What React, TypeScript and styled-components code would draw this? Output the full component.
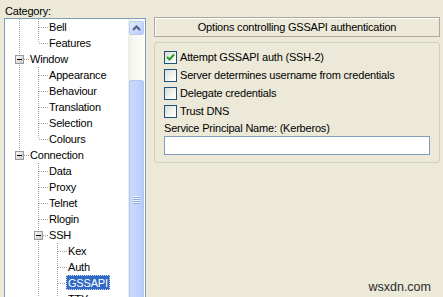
import styled, { createGlobalStyle } from "styled-components";

const GlobalStyle = createGlobalStyle`
  html, body {
    margin: 0;
    padding: 0;
    background: #ece9d8;
  }
  body {
    font-family: "Liberation Sans", Arial, sans-serif;
    font-size: 11px;
    letter-spacing: -0.2px;
    color: #000;
  }
`;

const Window = styled.div`
  width: 443px;
  height: 297px;
  overflow: hidden;
  background: #ece9d8;
  display: flex;
  position: relative;
`;

const LeftColumn = styled.div`
  width: 142px;
  padding-left: 4px;
  display: flex;
  flex-direction: column;
`;

const CategoryLabel = styled.div`
  height: 14px;
  padding-top: 5px;
  padding-left: 1px;
  line-height: 13px;
`;

const TreeBox = styled.div`
  height: 300px;
  border: 1px solid #7f9db9;
  background: #fff;
  display: flex;
`;

const TreeList = styled.div`
  flex: 1;
  padding-left: 5px;
  display: flex;
  flex-direction: column;
`;

const TreeRow = styled.div`
  height: 16px;
  display: flex;
  align-items: flex-start;
  white-space: nowrap;
`;

const TreeLabel = styled.span<{ $selected?: boolean }>`
  height: 15px;
  padding: 2px 2px 0 2px;
  line-height: 13px;
  margin-left: -1px;
  box-sizing: border-box;
  background: ${(p) => (p.$selected ? "#316ac5" : "transparent")};
  color: ${(p) => (p.$selected ? "#fff" : "#000")};
  outline: ${(p) => (p.$selected ? "1px dotted #c9d6ee" : "none")};
  outline-offset: -1px;
`;

const ScrollBar = styled.div`
  width: 17px;
  display: flex;
  flex-direction: column;
  align-items: center;
  background: linear-gradient(90deg, #eeede5 0%, #f7f7f1 30%, #fdfdfa 100%);
`;

const ScrollButton = styled.div`
  width: 15px;
  height: 15px;
  margin-top: 2px;
  box-sizing: border-box;
  border: 1px solid #b8cbf5;
  border-radius: 2px;
  background: linear-gradient(135deg, #e1eafe 0%, #c7d7fc 60%, #b7cbf7 100%);
  display: flex;
  align-items: center;
  justify-content: center;
`;

const ScrollTrack = styled.div`
  height: 50px;
`;

const ScrollThumb = styled.div`
  width: 15px;
  height: 266px;
  box-sizing: border-box;
  border: 1px solid #b4c7f2;
  border-radius: 2px;
  background: linear-gradient(90deg, #c9d9fd 0%, #c3d4fc 50%, #b8cbf8 100%);
  display: flex;
  flex-direction: column;
  align-items: center;
  justify-content: center;
  gap: 1px;
`;

const Grip = styled.div`
  width: 7px;
  height: 1px;
  background: #eef3ff;
  box-shadow: 0 1px 0 #8caae6;
`;

const RightColumn = styled.div`
  flex: 1;
  padding: 17px 3px 0 8px;
  display: flex;
  flex-direction: column;
  gap: 5px;
`;

const HeaderBox = styled.div`
  height: 20px;
  box-sizing: border-box;
  border: 1px solid #aca899;
  box-shadow: inset 1px 1px 0 #fff;
  display: flex;
  align-items: center;
  justify-content: center;
`;

const GroupBox = styled.div`
  height: 121px;
  box-sizing: border-box;
  border: 1px solid #d0d0bf;
  border-radius: 3px;
  padding: 5px 9px 0 9px;
  display: flex;
  flex-direction: column;
`;

const CheckRow = styled.label`
  height: 18px;
  display: flex;
  align-items: center;
  gap: 3px;
`;

const CheckBox = styled.span`
  width: 13px;
  height: 13px;
  box-sizing: border-box;
  border: 1px solid #1c5180;
  background: linear-gradient(135deg, #dcdcd7 0%, #f4f4f0 60%, #ffffff 100%);
  display: flex;
  align-items: center;
  justify-content: center;
`;

const FieldLabel = styled.div`
  height: 16px;
  line-height: 16px;
`;

const TextField = styled.div`
  height: 19px;
  box-sizing: border-box;
  border: 1px solid #7f9db9;
  background: #fff;
`;

const Watermark = styled.div`
  position: absolute;
  right: 12px;
  bottom: 3px;
  font-family: "Liberation Sans", Arial, sans-serif;
  font-size: 12.5px;
  letter-spacing: 0;
  color: #2a2a2a;
`;

type Guide = "none" | "pipe" | "tee" | "ell";

interface Node {
  label: string;
  guides: Guide[];
  box?: boolean;
  selected?: boolean;
}

const nodes: Node[] = [
  { label: "Bell", guides: ["pipe", "tee"] },
  { label: "Features", guides: ["pipe", "ell"] },
  { label: "Window", guides: ["tee"], box: true },
  { label: "Appearance", guides: ["pipe", "tee"] },
  { label: "Behaviour", guides: ["pipe", "tee"] },
  { label: "Translation", guides: ["pipe", "tee"] },
  { label: "Selection", guides: ["pipe", "tee"] },
  { label: "Colours", guides: ["pipe", "ell"] },
  { label: "Connection", guides: ["ell"], box: true },
  { label: "Data", guides: ["none", "tee"] },
  { label: "Proxy", guides: ["none", "tee"] },
  { label: "Telnet", guides: ["none", "tee"] },
  { label: "Rlogin", guides: ["none", "tee"] },
  { label: "SSH", guides: ["none", "tee"], box: true },
  { label: "Kex", guides: ["none", "pipe", "tee"] },
  { label: "Auth", guides: ["none", "pipe", "tee"] },
  { label: "GSSAPI", guides: ["none", "pipe", "tee"], selected: true },
  { label: "TTY", guides: ["none", "pipe", "tee"] },
];

const dot = { stroke: "#a0a0a0", strokeWidth: 1, strokeDasharray: "1 1" };

const GuideCell = ({ kind, box }: { kind: Guide; box?: boolean }) => (
  <svg width="19" height="16" viewBox="0 0 19 16" style={{ flexShrink: 0 }}>
    {kind === "pipe" && <line x1="9.5" y1="0" x2="9.5" y2="16" {...dot} />}
    {kind === "tee" && <line x1="9.5" y1="0" x2="9.5" y2="16" {...dot} />}
    {kind === "ell" && <line x1="9.5" y1="0" x2="9.5" y2="8" {...dot} />}
    {(kind === "tee" || kind === "ell") && (
      <line x1="10" y1="8.5" x2="19" y2="8.5" {...dot} />
    )}
    {box && (
      <g>
        <defs>
          <linearGradient id="tb" x1="0" y1="0" x2="1" y2="1">
            <stop offset="0" stopColor="#ffffff" />
            <stop offset="1" stopColor="#c9c5b6" />
          </linearGradient>
        </defs>
        <rect x="5.5" y="4.5" width="8" height="8" fill="url(#tb)" stroke="#8e9ca6" />
        <line x1="7" y1="8.5" x2="12" y2="8.5" stroke="#000" />
      </g>
    )}
  </svg>
);

const TreeItem = ({ node }: { node: Node }) => (
  <TreeRow>
    {node.guides.map((g, i) => (
      <GuideCell key={i} kind={g} box={node.box && i === node.guides.length - 1} />
    ))}
    <TreeLabel $selected={node.selected}>{node.label}</TreeLabel>
  </TreeRow>
);

const CheckMark = () => (
  <svg width="9" height="9" viewBox="0 0 9 9">
    <path d="M1 4 L3.5 6.5 L8 1.5" fill="none" stroke="#21a121" strokeWidth="2" />
  </svg>
);

const options = [
  { label: "Attempt GSSAPI auth (SSH-2)", checked: true },
  { label: "Server determines username from credentials", checked: false },
  { label: "Delegate credentials", checked: false },
  { label: "Trust DNS", checked: false },
];

export default function App() {
  return (
    <>
      <GlobalStyle />
      <Window>
        <LeftColumn>
          <CategoryLabel>Category:</CategoryLabel>
          <TreeBox>
            <TreeList>
              {nodes.map((n) => (
                <TreeItem key={n.label} node={n} />
              ))}
            </TreeList>
            <ScrollBar>
              <ScrollButton>
                <svg width="9" height="6" viewBox="0 0 9 6">
                  <path d="M1 5 L4.5 1.5 L8 5" fill="none" stroke="#4d6185" strokeWidth="2" />
                </svg>
              </ScrollButton>
              <ScrollTrack />
              <ScrollThumb>
                <Grip />
                <Grip />
                <Grip />
                <Grip />
              </ScrollThumb>
            </ScrollBar>
          </TreeBox>
        </LeftColumn>
        <RightColumn>
          <HeaderBox>Options controlling GSSAPI authentication</HeaderBox>
          <GroupBox>
            {options.map((o) => (
              <CheckRow key={o.label}>
                <CheckBox>{o.checked && <CheckMark />}</CheckBox>
                {o.label}
              </CheckRow>
            ))}
            <FieldLabel>Service Principal Name: (Kerberos)</FieldLabel>
            <TextField />
          </GroupBox>
        </RightColumn>
        <Watermark>wsxdn.com</Watermark>
      </Window>
    </>
  );
}
